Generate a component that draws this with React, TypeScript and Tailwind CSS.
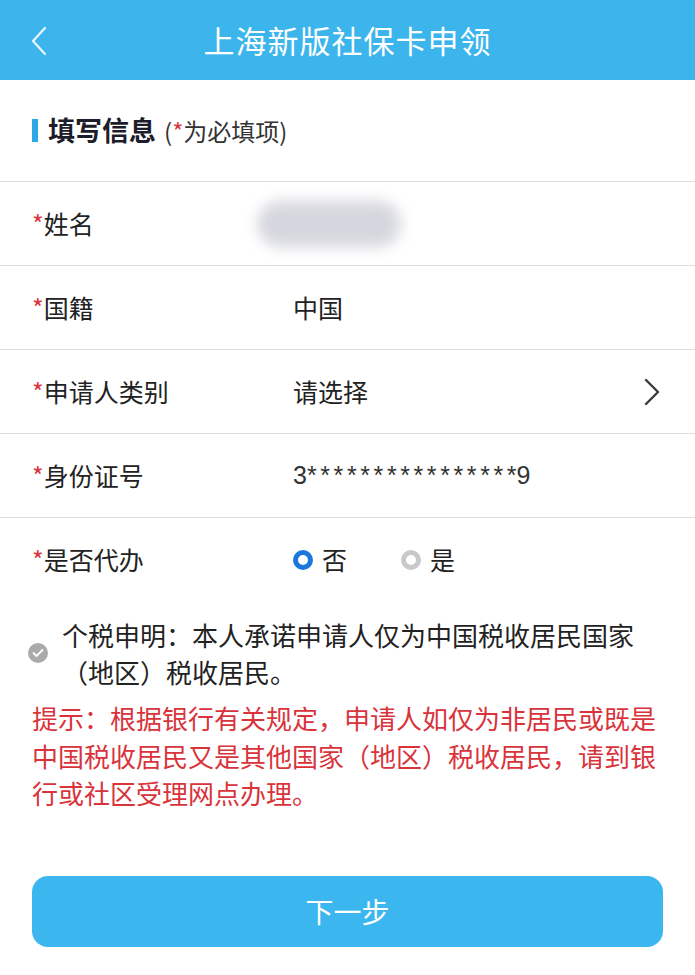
import { useState } from "react";

const font = { fontFamily: '"Noto Sans CJK SC", "Noto Sans", sans-serif' };

function Row({ label, children, last }: { label: string; children?: React.ReactNode; last?: boolean }) {
  return (
    <div className={`flex items-center h-[84px] px-[32px] ${last ? "" : "border-b border-[#dedede]"}`}>
      <div className="w-[261px] text-[25px] text-[#222]">
        <span className="text-[#d9363e]">*</span>
        {label}
      </div>
      <div className="flex-1 flex items-center text-[25px] text-[#222]">{children}</div>
    </div>
  );
}

function Radio({ on, label, onClick }: { on: boolean; label: string; onClick: () => void }) {
  return (
    <button onClick={onClick} className="flex items-center gap-[9px]">
      <span
        className={`w-[20px] h-[20px] rounded-full border-[5px] bg-white ${on ? "border-[#1a78dc]" : "border-[#c9c9c9]"}`}
      />
      <span>{label}</span>
    </button>
  );
}

export default function App() {
  const [proxy, setProxy] = useState(false);

  return (
    <div className="w-[695px] h-[975px] bg-white overflow-hidden" style={font}>
      <header className="relative h-[80px] bg-[#3cb5ec] flex items-center justify-center">
        <svg className="absolute left-[30px] top-[26px]" width="18" height="30" viewBox="0 0 18 30">
          <path d="M15 2 L3 15 L15 28" fill="none" stroke="#eaf7fd" strokeWidth="2.2" strokeLinecap="round" strokeLinejoin="round" />
        </svg>
        <h1 className="text-[31px] text-white tracking-[1px]">上海新版社保卡申领</h1>
      </header>

      <div className="h-[102px] px-[32px] flex items-center border-b border-[#dedede]">
        <span className="w-[6px] h-[23px] bg-[#2ea8e4] mr-[10px]" />
        <span className="text-[27px] font-bold text-[#1c1c2a]">填写信息</span>
        <span className="text-[24px] text-[#333] ml-[8px]">
          (<span className="text-[#d9363e]">*</span>为必填项)
        </span>
      </div>

      <Row label="姓名">
        <div className="ml-[-36px] w-[144px] h-[46px] rounded-full bg-[#d6d7de] blur-[7px]" />
      </Row>
      <Row label="国籍">中国</Row>
      <Row label="申请人类别">
        <span className="flex-1">请选择</span>
        <svg width="18" height="28" viewBox="0 0 18 28" className="mr-[2px]">
          <path d="M3 2 L15 14 L3 26" fill="none" stroke="#3a3a3a" strokeWidth="2.4" strokeLinecap="round" strokeLinejoin="round" />
        </svg>
      </Row>
      <Row label="身份证号">
        <span style={{ fontFamily: '"Liberation Sans", sans-serif' }} className="text-[25px] text-[#333]">
          3<span className="tracking-[3.6px]">***************</span>*9
        </span>
      </Row>
      <Row label="是否代办" last>
        <div className="flex items-center gap-[54px]">
          <Radio on={!proxy} label="否" onClick={() => setProxy(false)} />
          <Radio on={proxy} label="是" onClick={() => setProxy(true)} />
        </div>
      </Row>

      <div className="flex items-center mt-[14px] pl-[28px] pr-[32px]">
        <span className="w-[20px] h-[20px] rounded-full bg-[#aaaaaa] flex items-center justify-center shrink-0 mr-[14px]">
          <svg width="12" height="10" viewBox="0 0 12 10">
            <path d="M1.5 5 L4.5 8 L10.5 2" fill="none" stroke="#fff" strokeWidth="1.8" strokeLinecap="round" strokeLinejoin="round" />
          </svg>
        </span>
        <p className="text-[26px] leading-[37px] text-[#222]">
          个税申明：本人承诺申请人仅为中国税收居民国家（地区）税收居民。
        </p>
      </div>

      <p className="mt-[9px] px-[32px] text-[26px] leading-[37.5px] text-[#d9333b]">
        提示：根据银行有关规定，申请人如仅为非居民或既是中国税收居民又是其他国家（地区）税收居民，请到银行或社区受理网点办理。
      </p>

      <div className="px-[32px] mt-[64px]">
        <button className="w-full h-[71px] rounded-[16px] bg-[#3cb6ee] text-white text-[28px]">下一步</button>
      </div>
    </div>
  );
}
